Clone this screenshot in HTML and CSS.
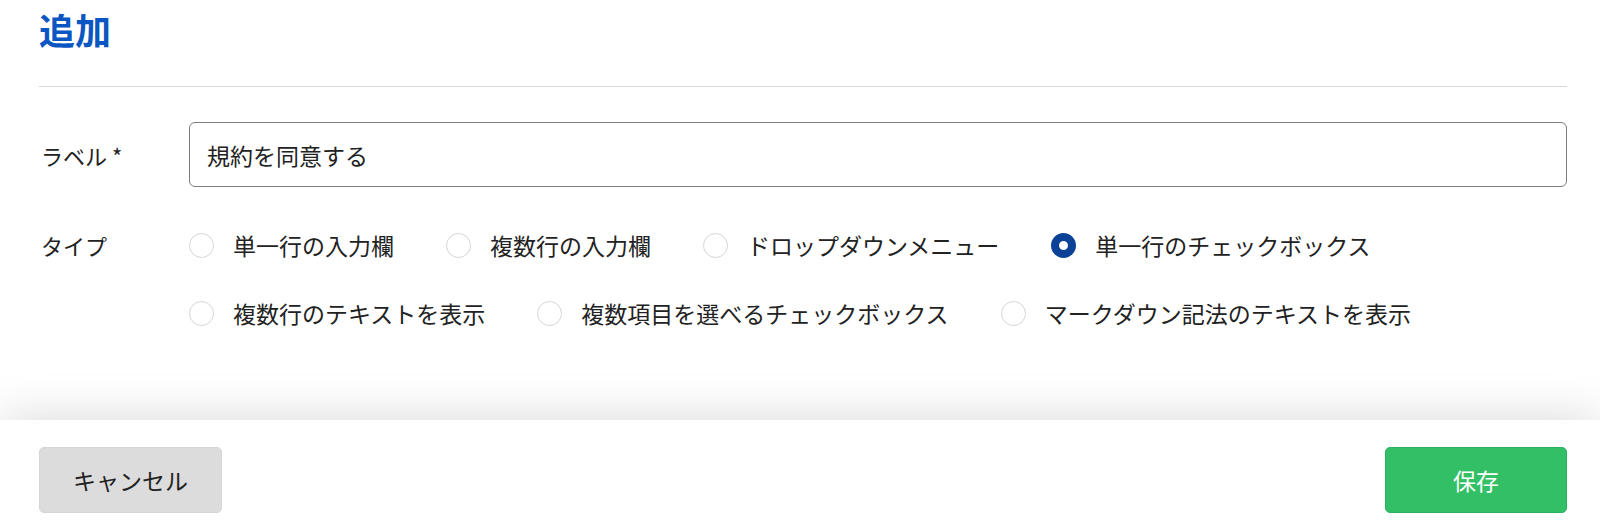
FILE: index.html
```html
<!DOCTYPE html>
<html lang="ja">
<head>
<meta charset="utf-8">
<title>追加</title>
<link rel="stylesheet" href="styles.css">
</head>
<body>
<div class="page">
  <main class="content">
    <h1 class="title">追加</h1>
    <hr class="divider">
    <div class="row field-row">
      <div class="label">ラベル *</div>
      <div class="input">規約を同意する</div>
    </div>
    <div class="row type-row">
      <div class="label">タイプ</div>
      <div class="options">
        <div class="option"><span class="radio"></span><span class="opt-text">単一行の入力欄</span></div>
        <div class="option"><span class="radio"></span><span class="opt-text">複数行の入力欄</span></div>
        <div class="option"><span class="radio"></span><span class="opt-text">ドロップダウンメニュー</span></div>
        <div class="option"><span class="radio checked"></span><span class="opt-text">単一行のチェックボックス</span></div>
        <div class="option"><span class="radio"></span><span class="opt-text">複数行のテキストを表示</span></div>
        <div class="option"><span class="radio"></span><span class="opt-text">複数項目を選べるチェックボックス</span></div>
        <div class="option"><span class="radio"></span><span class="opt-text">マークダウン記法のテキストを表示</span></div>
      </div>
    </div>
  </main>
  <footer class="footer">
    <button class="btn btn-cancel">キャンセル</button>
    <button class="btn btn-save">保存</button>
  </footer>
</div>
</body>
</html>
```

FILE: styles.css
```css
* { box-sizing: border-box; }
html, body {
  margin: 0;
  padding: 0;
  background: #fff;
}
body {
  font-family: "Noto Sans CJK JP", "Noto Sans", sans-serif;
  color: #222;
  overflow: hidden;
}
.page {
  width: 1600px;
  height: 523px;
  display: flex;
  flex-direction: column;
}
.content {
  flex: 1;
  padding: 0 33px 0 39px;
}
.title {
  margin: 8px 0 0 0;
  font-size: 36px;
  line-height: 42px;
  font-weight: 700;
  color: #0a56c2;
}
.divider {
  margin: 36px 0 0 0;
  border: 0;
  height: 1px;
  background: #d9d9d9;
}
.row {
  display: flex;
}
.label {
  width: 150px;
  flex: none;
  font-size: 22px;
  padding-left: 2px;
}
.field-row {
  margin-top: 35px;
  align-items: center;
}
.input {
  flex: 1;
  height: 65px;
  border: 1.5px solid #7d7d7d;
  border-radius: 6px;
  padding: 0 17px;
  display: flex;
  align-items: center;
  font-size: 23px;
  color: #222;
}
.type-row {
  margin-top: 43px;
  align-items: flex-start;
}
.type-row .label {
  line-height: 30px;
}
.options {
  flex: 1;
  display: flex;
  flex-wrap: wrap;
  row-gap: 38px;
}
.option {
  display: flex;
  align-items: center;
  height: 30px;
  margin-right: 52px;
}
.radio {
  width: 25px;
  height: 25px;
  border-radius: 50%;
  border: 1.5px solid #d6d6d6;
  background: #fff;
  margin-right: 19px;
  flex: none;
}
.radio.checked {
  border: 8px solid #0b4196;
  background: #fff;
}
.opt-text {
  font-size: 23px;
  white-space: nowrap;
  color: #222;
}
.footer {
  height: 103px;
  flex: none;
  display: flex;
  justify-content: space-between;
  align-items: flex-start;
  padding: 27px 33px 0 39px;
  background: #fff;
  box-shadow: 0 0 50px rgba(0, 0, 0, 0.16);
  position: relative;
}
.btn {
  width: 183px;
  height: 66px;
  border-radius: 5px;
  font-family: "Noto Sans CJK JP", "Noto Sans", sans-serif;
  font-size: 23px;
  cursor: pointer;
}
.btn-cancel {
  background: #dcdcdc;
  border: 1px solid #d6d6d6;
  color: #222;
}
.btn-save {
  width: 182px;
  background: #33bf66;
  border: 1px solid #2bb25c;
  color: #fff;
}
```
